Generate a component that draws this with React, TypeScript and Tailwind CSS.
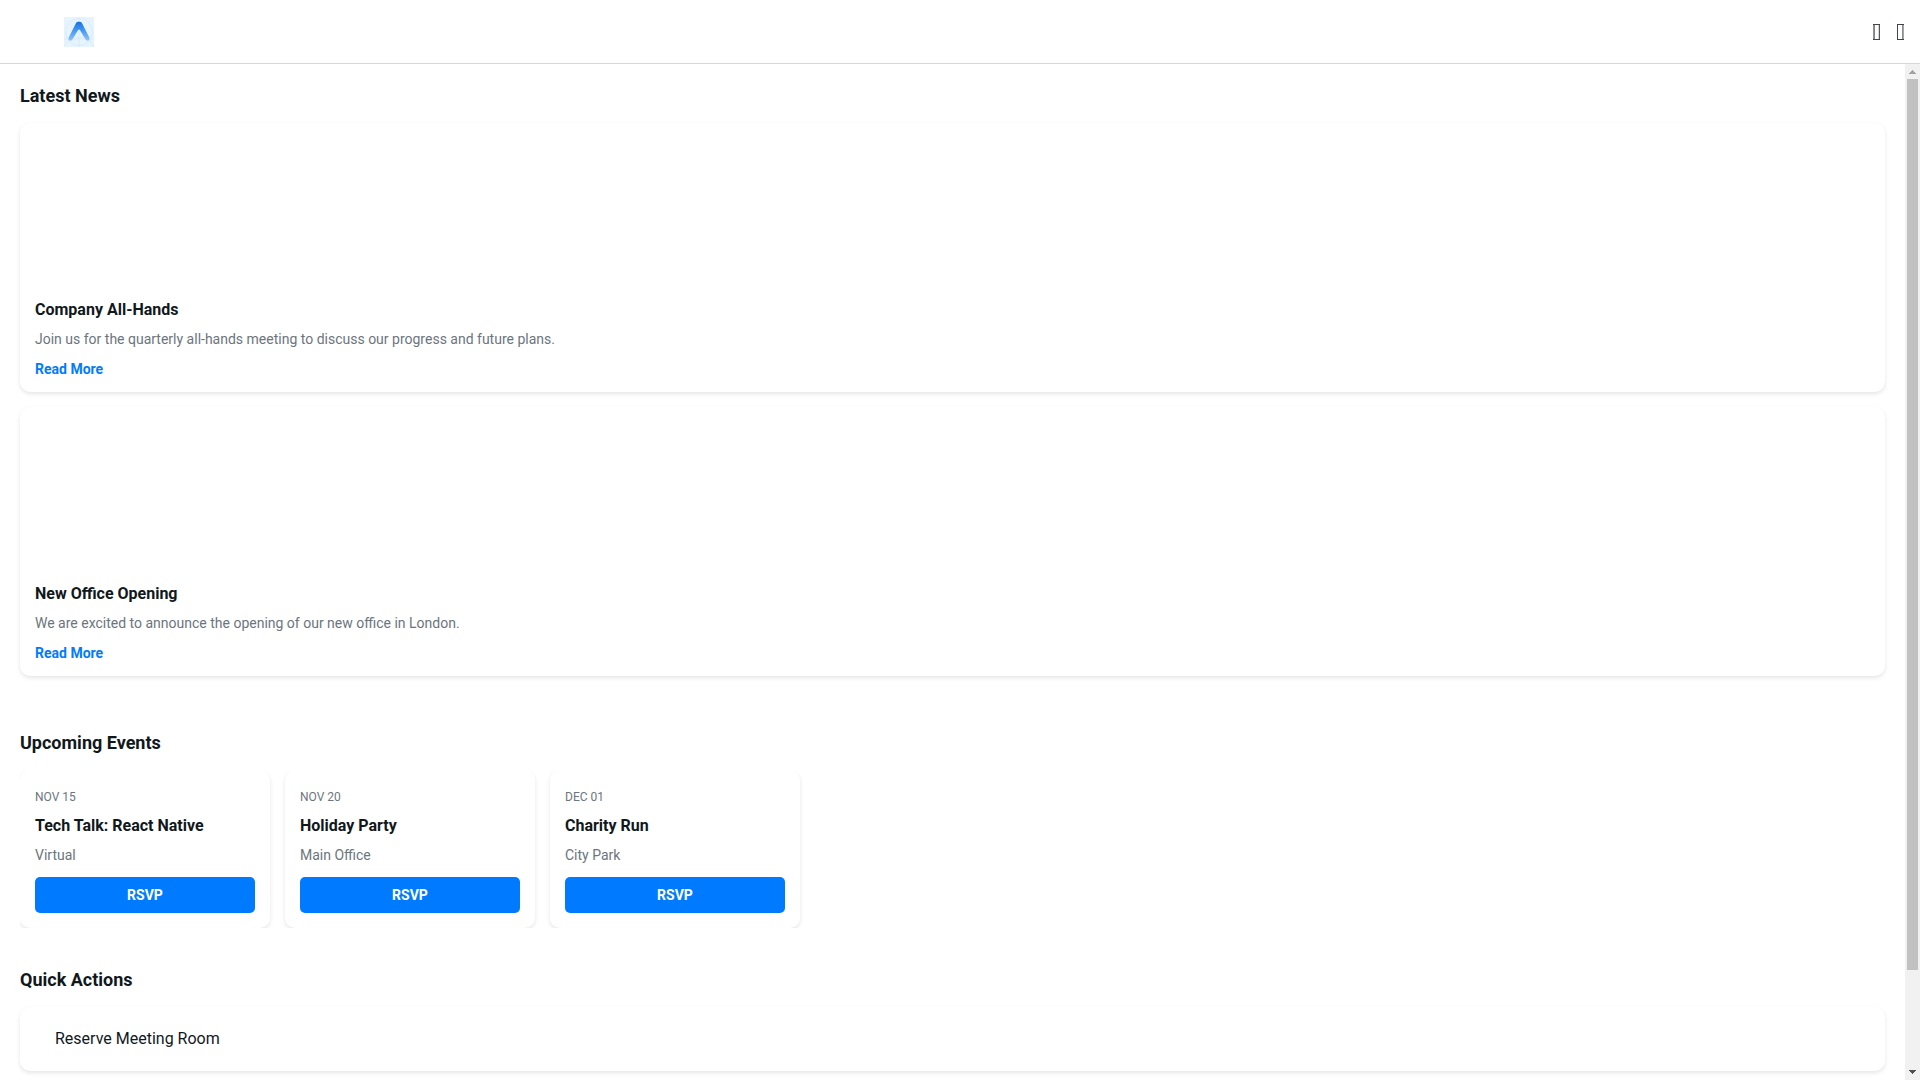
/**
 * Company intranet home screen
 * Latest news, upcoming events and quick actions under a slim top bar
 */

interface NewsItem {
  title: string
  summary: string
}

interface EventItem {
  date: string
  title: string
  location: string
}

const news: NewsItem[] = [
  {
    title: 'Company All-Hands',
    summary:
      'Join us for the quarterly all-hands meeting to discuss our progress and future plans.',
  },
  {
    title: 'New Office Opening',
    summary: 'We are excited to announce the opening of our new office in London.',
  },
]

const events: EventItem[] = [
  { date: 'NOV 15', title: 'Tech Talk: React Native', location: 'Virtual' },
  { date: 'NOV 20', title: 'Holiday Party', location: 'Main Office' },
  { date: 'DEC 01', title: 'Charity Run', location: 'City Park' },
]

const actions = ['Reserve Meeting Room']

const cardClass = 'rounded-[10px] bg-white shadow-[0_2px_4px_rgba(0,0,0,0.1)]'

function Logo() {
  return (
    <svg className="size-[30px]" viewBox="0 0 30 30" aria-hidden="true">
      <defs>
        <linearGradient id="logo-stroke" x1="0" y1="0" x2="0" y2="1">
          <stop offset="0" stopColor="#1673de" />
          <stop offset="0.45" stopColor="#4397f2" />
          <stop offset="1" stopColor="#93c3f6" />
        </linearGradient>
      </defs>
      <rect width="30" height="30" fill="#e6f4fe" />
      <g fill="none" stroke="#d3e5f1" strokeWidth="0.6">
        <circle cx="15" cy="15" r="13.5" />
        <circle cx="15" cy="15" r="6" />
        <path d="M15 0v30M0 22h30M0 30l5-7M30 30l-5-7" />
      </g>
      <path
        d="M12.2 5.8Q12.900 4.700 14.200 4.700h1.600q1.300 0 2 1.100l7.500 14.600q.8 1.800-.5 2.800-2.100 1.200-3.400-.9L15.900 13q-.9-1-1.800 0L8.600 22.300q-1.300 2.100-3.400.9-1.300-1-.5-2.800z"
        fill="url(#logo-stroke)"
      />
    </svg>
  )
}

function BoxIcon({ flipped = false }: { flipped?: boolean }) {
  return (
    <svg
      className="h-4 w-[7px]"
      viewBox="0 0 7 16"
      shapeRendering="crispEdges"
      aria-hidden="true"
    >
      <path d="M0 0h7v1H0zM0 15h7v1H0z" fill="#444" />
      {flipped ? (
        <>
          <path d="M0 1h1v14H0z" fill="#444" />
          <path d="M5 1h1v14H5z" fill="#868c90" />
          <path d="M6 1h1v14H6z" fill="#a0a6aa" />
        </>
      ) : (
        <>
          <path d="M0 1h1v14H0z" fill="#8b9195" />
          <path d="M1 1h1v14H1z" fill="#80868a" />
          <path d="M5 1h1v14H5z" fill="#d8dadb" />
          <path d="M6 1h1v14H6z" fill="#555" />
        </>
      )}
    </svg>
  )
}

function SectionTitle({ children }: { children: string }) {
  return <h2 className="mb-[15px] text-lg/6 font-bold">{children}</h2>
}

function NewsCard({ title, summary }: NewsItem) {
  return (
    <article className={`${cardClass} p-[15px]`}>
      <div className="mb-2.5 h-[150px]" />
      <h3 className="text-base/6 font-bold">{title}</h3>
      <p className="mt-[5px] mb-2.5 text-sm/6 text-[#6c757d]">{summary}</p>
      <a href="#" className="block w-fit text-sm/4 font-bold text-[#007bff]">
        Read More
      </a>
    </article>
  )
}

function EventCard({ date, title, location }: EventItem) {
  return (
    <article className={`${cardClass} w-[250px] shrink-0 p-[15px]`}>
      <p className="text-xs/6 text-[#6c757d]">{date}</p>
      <h3 className="mt-[5px] text-base/6 font-bold">{title}</h3>
      <p className="mt-[5px] mb-2.5 text-sm/6 text-[#6c757d]">{location}</p>
      <button
        type="button"
        className="block w-full rounded-[5px] bg-[#007bff] py-2.5 text-sm/4 font-bold text-white"
      >
        RSVP
      </button>
    </article>
  )
}

function ScrollTrack() {
  return (
    <div className="flex w-[15px] shrink-0 flex-col items-center bg-[#f1f1f1]" aria-hidden="true">
      <svg className="h-[15px] w-[15px] shrink-0" viewBox="0 0 15 15" shapeRendering="crispEdges">
        <path d="M7 6h1v1h1v1h1v1h1v1H4V9h1V8h1V7h1z" fill="#a3a3a3" />
      </svg>
      <div className="flex w-full flex-1 flex-col px-0.5">
        <div className="h-[90.4%] bg-[#c1c1c1]" />
      </div>
      <svg className="h-[15px] w-[15px] shrink-0" viewBox="0 0 15 15" shapeRendering="crispEdges">
        <path d="M4 5h7v1h-1v1H9v1H8v1H7V8H6V7H5V6H4z" fill="#505050" />
      </svg>
    </div>
  )
}

export default function App() {
  return (
    <div className="flex h-screen flex-col bg-white font-[Roboto,sans-serif] text-[#11181c]">
      <header className="flex h-16 shrink-0 items-center justify-between border-b border-[#d8d8d8] pr-4 pl-16">
        <Logo />
        <div className="flex gap-[17px]">
          <button type="button" aria-label="Search">
            <BoxIcon />
          </button>
          <button type="button" aria-label="Notifications">
            <BoxIcon flipped />
          </button>
        </div>
      </header>

      <div className="flex min-h-0 flex-1">
        <main className="flex min-w-0 flex-1 flex-col gap-10 overflow-y-auto p-5 [scrollbar-width:none]">
          <section className="pb-[15px]">
            <SectionTitle>Latest News</SectionTitle>
            <div className="flex flex-col gap-[15px]">
              {news.map((item) => (
                <NewsCard key={item.title} {...item} />
              ))}
            </div>
          </section>

          <section>
            <SectionTitle>Upcoming Events</SectionTitle>
            <div className="flex gap-[15px] overflow-x-auto [scrollbar-width:none]">
              {events.map((event) => (
                <EventCard key={event.title} {...event} />
              ))}
            </div>
          </section>

          <section>
            <SectionTitle>Quick Actions</SectionTitle>
            {actions.map((action) => (
              <button
                key={action}
                type="button"
                className={`${cardClass} block w-full py-5 pr-5 pl-[35px] text-left text-base/6`}
              >
                {action}
              </button>
            ))}
          </section>
        </main>
        <ScrollTrack />
      </div>
    </div>
  )
}
